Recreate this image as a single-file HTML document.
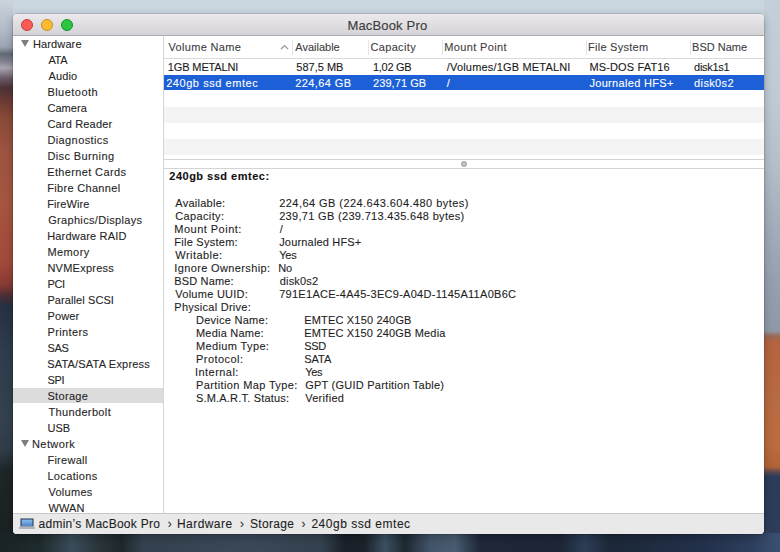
<!DOCTYPE html>
<html><head><meta charset="utf-8">
<style>
*{margin:0;padding:0;box-sizing:border-box}
html,body{width:780px;height:552px;overflow:hidden}
body{position:relative;font-family:"Liberation Sans",sans-serif;color:#1e1e1e;background:#aab3bf}
.bg{position:absolute;left:0;top:0;width:780px;height:552px;overflow:hidden}
.t{position:absolute;white-space:nowrap;line-height:1;-webkit-text-stroke:0.1px currentColor}
#win{position:absolute;left:13px;top:14px;width:751px;height:519.5px;border-radius:4px;overflow:hidden;background:#fff;box-shadow:0 0 0 0.5px rgba(0,0,0,0.22),0 3px 10px rgba(0,0,0,0.25)}
#title{position:absolute;left:0;top:0;width:751px;height:22px;background:linear-gradient(#ebe9eb,#d5d3d7);border-bottom:1px solid #ababab}
.tl{position:absolute;top:5px;width:12px;height:12px;border-radius:50%}
#ttext{position:absolute;left:0;top:4px;width:751px;text-align:center;font-size:13px;line-height:15px;color:#383838}
.tri{position:absolute;width:0;height:0;border-left:4.5px solid transparent;border-right:4.5px solid transparent;border-top:7px solid #7f7f7f}
.vd{position:absolute;width:1px;background:#e4e4e4}
</style></head><body>
<div class="bg">
 <div style="position:absolute;left:0;top:0;width:780px;height:552px;background:linear-gradient(#cad6e0 0px,#bfcbd5 100px,#a7b2bf 160px,#8e9aaa 240px,#8a95a3 330px,#2c3a50 470px,#243244 552px)"></div>
 <div style="position:absolute;left:0;top:0;width:13px;height:552px;background:linear-gradient(#cbd3dc 0px,#b2bcc8 30px,#9aa4b2 47px,#626a76 54px,#80808e 61px,#aca6b2 68px,#6c5c68 78px,#4c3238 88px,#6a3a34 100px,#8a4a38 118px,#9c5440 150px,#a65640 200px,#a24a3a 262px,#8a3c34 284px,#4a2e36 296px,#263242 306px,#2e3c4c 350px,#34424f 420px,#303c48 450px,#1e2628 470px,#182022 552px)"></div>
 <div style="position:absolute;left:764px;top:0;width:16px;height:552px;background:linear-gradient(#c4cfd9 0px,#bfcad4 100px,#b6c0cb 160px,#a4afbc 220px,#96a1b0 280px,#8e98a6 331px,#9a6a58 336px,#b4643e 342px,#b86a42 400px,#bc6c3e 445px,#b26238 467px,#5a4850 472px,#2c3c58 477px,#2e3e5a 552px)"></div>
 <div style="position:absolute;left:0;top:533px;width:780px;height:19px;background:linear-gradient(90deg,#1a2325 0px,#1e2a2c 40px,#3a4c5a 72px,#2a363c 98px,#1e282c 122px,#34424f 142px,#3a4858 250px,#34424f 322px,#1a2028 345px,#1c232a 365px,#3a5062 385px,#1e2830 405px,#42546a 430px,#4a5c72 455px,#1e2838 480px,#1c2636 560px,#2c3e56 585px,#1c2838 610px,#22304a 700px,#2c3c5a 745px,#3a5070 780px)"></div>
</div>
<div id="win">
 <div id="title">
  <div class="tl" style="left:8px;background:#fc5b55;border:1px solid #c23d3a"></div>
  <div class="tl" style="left:28px;background:#fdbb2f;border:1px solid #c98f22"></div>
  <div class="tl" style="left:48px;background:#2ac63e;border:1px solid #17902b"></div>
 </div>
 <div style="position:absolute;left:150px;top:22px;width:1px;height:477px;background:#d6d6d6"></div>
 <div style="position:absolute;left:0px;top:374px;width:150px;height:15px;background:#dcdcdc"></div>
 <div class="tri" style="left:8px;top:26px"></div>
 <div class="tri" style="left:8px;top:426px"></div>
 <div style="position:absolute;left:151px;top:44px;width:600px;height:1px;background:#dadada"></div>
 <div class="vd" style="left:279px;top:26px;height:15px"></div>
 <div class="vd" style="left:355px;top:26px;height:15px"></div>
 <div class="vd" style="left:429px;top:26px;height:15px"></div>
 <div class="vd" style="left:573px;top:26px;height:15px"></div>
 <div class="vd" style="left:677px;top:26px;height:15px"></div>
 <svg style="position:absolute;left:267px;top:30px" width="9" height="6"><path d="M1 5 L4.5 1.5 L8 5" fill="none" stroke="#9a9a9a" stroke-width="1.2"/></svg>
 <div style="position:absolute;left:151px;top:61px;width:600px;height:15px;background:#1d5fd6"></div>
 <div style="position:absolute;left:151px;top:93px;width:600px;height:16px;background:#f4f4f4"></div>
 <div style="position:absolute;left:151px;top:125px;width:600px;height:16px;background:#f4f4f4"></div>
 <div style="position:absolute;left:151px;top:145px;width:600px;height:1px;background:#d4d4d4"></div>
 <div style="position:absolute;left:151px;top:154px;width:600px;height:1px;background:#d4d4d4"></div>
 <div style="position:absolute;left:448px;top:147px;width:6px;height:6px;border-radius:50%;background:#c4c4c4;border:1.5px solid #9c9c9c"></div>
 <div style="position:absolute;left:0px;top:499px;width:751px;height:20.5px;background:#e9e9e9;border-top:1px solid #c8c8c8"></div>
 <svg style="position:absolute;left:6px;top:504px" width="17" height="12" viewBox="0 0 17 12"><defs><linearGradient id="lg" x1="0" y1="0" x2="0" y2="1"><stop offset="0" stop-color="#8cbcec"/><stop offset="1" stop-color="#4f86c6"/></linearGradient></defs><rect x="1.5" y="0.5" width="13" height="8" fill="#1c2f4a"/><rect x="2.5" y="1.5" width="11" height="6.5" fill="url(#lg)"/><rect x="0" y="8.6" width="16" height="2.4" rx="0.6" fill="#aeb3bb"/></svg>
 <div class="t" id="t0" style="left:20.00px;top:25.49px;font-size:11px;letter-spacing:0.120px;color:#262626">Hardware</div>
 <div class="t" id="t1" style="left:35.40px;top:41.49px;font-size:11px;letter-spacing:-0.300px;color:#262626">ATA</div>
 <div class="t" id="t2" style="left:35.40px;top:57.49px;font-size:11px;letter-spacing:0.150px;color:#262626">Audio</div>
 <div class="t" id="t3" style="left:34.40px;top:73.49px;font-size:11px;letter-spacing:0.475px;color:#262626">Bluetooth</div>
 <div class="t" id="t4" style="left:34.40px;top:89.49px;font-size:11px;letter-spacing:0.050px;color:#262626">Camera</div>
 <div class="t" id="t5" style="left:34.40px;top:105.49px;font-size:11px;letter-spacing:0.180px;color:#262626">Card Reader</div>
 <div class="t" id="t6" style="left:34.40px;top:121.49px;font-size:11px;letter-spacing:0.400px;color:#262626">Diagnostics</div>
 <div class="t" id="t7" style="left:34.40px;top:137.49px;font-size:11px;letter-spacing:0.390px;color:#262626">Disc Burning</div>
 <div class="t" id="t8" style="left:34.20px;top:153.49px;font-size:11px;letter-spacing:0.364px;color:#262626">Ethernet Cards</div>
 <div class="t" id="t9" style="left:34.20px;top:169.49px;font-size:11px;letter-spacing:0.316px;color:#262626">Fibre Channel</div>
 <div class="t" id="t10" style="left:34.20px;top:185.49px;font-size:11px;letter-spacing:0.090px;color:#262626">FireWire</div>
 <div class="t" id="t11" style="left:35.20px;top:201.49px;font-size:11px;letter-spacing:0.323px;color:#262626">Graphics/Displays</div>
 <div class="t" id="t12" style="left:34.20px;top:217.49px;font-size:11px;letter-spacing:0.182px;color:#262626">Hardware RAID</div>
 <div class="t" id="t13" style="left:34.40px;top:233.49px;font-size:11px;letter-spacing:0.430px;color:#262626">Memory</div>
 <div class="t" id="t14" style="left:34.40px;top:249.49px;font-size:11px;letter-spacing:0.251px;color:#262626">NVMExpress</div>
 <div class="t" id="t15" style="left:34.40px;top:265.49px;font-size:11px;letter-spacing:-0.300px;color:#262626">PCI</div>
 <div class="t" id="t16" style="left:34.40px;top:281.49px;font-size:11px;letter-spacing:0.093px;color:#262626">Parallel SCSI</div>
 <div class="t" id="t17" style="left:34.40px;top:297.49px;font-size:11px;letter-spacing:0.175px;color:#262626">Power</div>
 <div class="t" id="t18" style="left:34.40px;top:313.49px;font-size:11px;letter-spacing:0.403px;color:#262626">Printers</div>
 <div class="t" id="t19" style="left:34.40px;top:329.49px;font-size:11px;letter-spacing:-0.300px;color:#262626">SAS</div>
 <div class="t" id="t20" style="left:34.20px;top:345.49px;font-size:11px;letter-spacing:0.198px;color:#262626">SATA/SATA Express</div>
 <div class="t" id="t21" style="left:34.40px;top:361.49px;font-size:11px;letter-spacing:-0.300px;color:#262626">SPI</div>
 <div class="t" id="t22" style="left:34.40px;top:377.49px;font-size:11px;letter-spacing:0.335px;color:#262626">Storage</div>
 <div class="t" id="t23" style="left:35.40px;top:393.49px;font-size:11px;letter-spacing:0.360px;color:#262626">Thunderbolt</div>
 <div class="t" id="t24" style="left:34.40px;top:409.49px;font-size:11px;letter-spacing:0.100px;color:#262626">USB</div>
 <div class="t" id="t25" style="left:19.00px;top:425.49px;font-size:11px;letter-spacing:0.417px;color:#262626">Network</div>
 <div class="t" id="t26" style="left:34.40px;top:441.49px;font-size:11px;letter-spacing:0.282px;color:#262626">Firewall</div>
 <div class="t" id="t27" style="left:34.40px;top:457.49px;font-size:11px;letter-spacing:0.350px;color:#262626">Locations</div>
 <div class="t" id="t28" style="left:35.40px;top:473.49px;font-size:11px;letter-spacing:0.285px;color:#262626">Volumes</div>
 <div class="t" id="t29" style="left:35.40px;top:489.49px;font-size:11px;letter-spacing:0.150px;color:#262626">WWAN</div>
 <div class="t" id="t30" style="left:155.50px;top:27.69px;font-size:11px;letter-spacing:0.330px;color:#404040">Volume Name</div>
 <div class="t" id="t31" style="left:282.30px;top:27.69px;font-size:11px;letter-spacing:-0.000px;color:#404040">Available</div>
 <div class="t" id="t32" style="left:357.40px;top:27.69px;font-size:11px;letter-spacing:0.353px;color:#404040">Capacity</div>
 <div class="t" id="t33" style="left:431.30px;top:27.69px;font-size:11px;letter-spacing:0.350px;color:#404040">Mount Point</div>
 <div class="t" id="t34" style="left:575.10px;top:27.69px;font-size:11px;letter-spacing:0.250px;color:#404040">File System</div>
 <div class="t" id="t35" style="left:679.10px;top:27.69px;font-size:11px;letter-spacing:0.007px;color:#404040">BSD Name</div>
 <div class="t" id="t36" style="left:154.80px;top:47.79px;font-size:11px;letter-spacing:-0.130px;color:#1a1a1a">1GB METALNI</div>
 <div class="t" id="t37" style="left:283.30px;top:47.79px;font-size:11px;letter-spacing:0.007px;color:#1a1a1a">587,5 MB</div>
 <div class="t" id="t38" style="left:360.00px;top:47.79px;font-size:11px;letter-spacing:-0.300px;color:#1a1a1a">1,02 GB</div>
 <div class="t" id="t39" style="left:433.80px;top:47.79px;font-size:11px;letter-spacing:0.179px;color:#1a1a1a">/Volumes/1GB METALNI</div>
 <div class="t" id="t40" style="left:576.40px;top:47.79px;font-size:11px;letter-spacing:0.149px;color:#1a1a1a">MS-DOS FAT16</div>
 <div class="t" id="t41" style="left:681.10px;top:47.79px;font-size:11px;letter-spacing:-0.300px;color:#1a1a1a">disk1s1</div>
 <div class="t" id="t42" style="left:153.20px;top:63.69px;font-size:11px;letter-spacing:0.553px;color:#ffffff">240gb ssd emtec</div>
 <div class="t" id="t43" style="left:282.30px;top:63.69px;font-size:11px;letter-spacing:0.406px;color:#ffffff">224,64 GB</div>
 <div class="t" id="t44" style="left:360.00px;top:63.69px;font-size:11px;letter-spacing:0.075px;color:#ffffff">239,71 GB</div>
 <div class="t" id="t45" style="left:433.80px;top:63.69px;font-size:11px;letter-spacing:0.150px;color:#ffffff">/</div>
 <div class="t" id="t46" style="left:576.40px;top:63.69px;font-size:11px;letter-spacing:0.318px;color:#ffffff">Journaled HFS+</div>
 <div class="t" id="t47" style="left:681.10px;top:63.69px;font-size:11px;letter-spacing:0.366px;color:#ffffff">disk0s2</div>
 <div class="t" id="t48" style="left:156.30px;top:156.89px;font-size:11px;letter-spacing:0.495px;color:#111;font-weight:bold">240gb ssd emtec:</div>
 <div class="t" id="t49" style="left:162.30px;top:183.99px;font-size:11px;letter-spacing:0.261px;color:#1e1e1e">Available:</div>
 <div class="t" id="t50" style="left:266.20px;top:183.99px;font-size:11px;letter-spacing:0.445px;color:#1e1e1e">224,64 GB (224.643.604.480 bytes)</div>
 <div class="t" id="t51" style="left:162.30px;top:196.99px;font-size:11px;letter-spacing:0.350px;color:#1e1e1e">Capacity:</div>
 <div class="t" id="t52" style="left:266.20px;top:196.99px;font-size:11px;letter-spacing:0.316px;color:#1e1e1e">239,71 GB (239.713.435.648 bytes)</div>
 <div class="t" id="t53" style="left:161.30px;top:209.99px;font-size:11px;letter-spacing:0.479px;color:#1e1e1e">Mount Point:</div>
 <div class="t" id="t54" style="left:266.80px;top:209.99px;font-size:11px;letter-spacing:0.150px;color:#1e1e1e">/</div>
 <div class="t" id="t55" style="left:161.30px;top:222.99px;font-size:11px;letter-spacing:0.255px;color:#1e1e1e">File System:</div>
 <div class="t" id="t56" style="left:266.20px;top:222.99px;font-size:11px;letter-spacing:0.178px;color:#1e1e1e">Journaled HFS+</div>
 <div class="t" id="t57" style="left:162.30px;top:235.99px;font-size:11px;letter-spacing:0.457px;color:#1e1e1e">Writable:</div>
 <div class="t" id="t58" style="left:266.20px;top:235.99px;font-size:11px;letter-spacing:-0.250px;color:#1e1e1e">Yes</div>
 <div class="t" id="t59" style="left:161.30px;top:248.99px;font-size:11px;letter-spacing:0.365px;color:#1e1e1e">Ignore Ownership:</div>
 <div class="t" id="t60" style="left:265.20px;top:248.99px;font-size:11px;letter-spacing:-0.200px;color:#1e1e1e">No</div>
 <div class="t" id="t61" style="left:161.30px;top:261.99px;font-size:11px;letter-spacing:0.150px;color:#1e1e1e">BSD Name:</div>
 <div class="t" id="t62" style="left:266.80px;top:261.99px;font-size:11px;letter-spacing:0.150px;color:#1e1e1e">disk0s2</div>
 <div class="t" id="t63" style="left:162.30px;top:274.99px;font-size:11px;letter-spacing:0.262px;color:#1e1e1e">Volume UUID:</div>
 <div class="t" id="t64" style="left:266.20px;top:274.99px;font-size:11px;letter-spacing:0.278px;color:#1e1e1e">791E1ACE-4A45-3EC9-A04D-1145A11A0B6C</div>
 <div class="t" id="t65" style="left:161.30px;top:287.99px;font-size:11px;letter-spacing:0.268px;color:#1e1e1e">Physical Drive:</div>
 <div class="t" id="t66" style="left:183.00px;top:300.99px;font-size:11px;letter-spacing:0.262px;color:#1e1e1e">Device Name:</div>
 <div class="t" id="t67" style="left:291.20px;top:300.99px;font-size:11px;letter-spacing:0.181px;color:#1e1e1e">EMTEC X150 240GB</div>
 <div class="t" id="t68" style="left:183.00px;top:313.99px;font-size:11px;letter-spacing:0.210px;color:#1e1e1e">Media Name:</div>
 <div class="t" id="t69" style="left:291.20px;top:313.99px;font-size:11px;letter-spacing:0.172px;color:#1e1e1e">EMTEC X150 240GB Media</div>
 <div class="t" id="t70" style="left:183.00px;top:326.99px;font-size:11px;letter-spacing:0.367px;color:#1e1e1e">Medium Type:</div>
 <div class="t" id="t71" style="left:291.20px;top:326.99px;font-size:11px;letter-spacing:-0.300px;color:#1e1e1e">SSD</div>
 <div class="t" id="t72" style="left:183.00px;top:339.99px;font-size:11px;letter-spacing:0.443px;color:#1e1e1e">Protocol:</div>
 <div class="t" id="t73" style="left:291.20px;top:339.99px;font-size:11px;letter-spacing:-0.003px;color:#1e1e1e">SATA</div>
 <div class="t" id="t74" style="left:182.00px;top:352.99px;font-size:11px;letter-spacing:0.450px;color:#1e1e1e">Internal:</div>
 <div class="t" id="t75" style="left:292.20px;top:352.99px;font-size:11px;letter-spacing:-0.300px;color:#1e1e1e">Yes</div>
 <div class="t" id="t76" style="left:183.00px;top:365.99px;font-size:11px;letter-spacing:0.373px;color:#1e1e1e">Partition Map Type:</div>
 <div class="t" id="t77" style="left:292.20px;top:365.99px;font-size:11px;letter-spacing:0.238px;color:#1e1e1e">GPT (GUID Partition Table)</div>
 <div class="t" id="t78" style="left:183.00px;top:378.99px;font-size:11px;letter-spacing:0.184px;color:#1e1e1e">S.M.A.R.T. Status:</div>
 <div class="t" id="t79" style="left:292.20px;top:378.99px;font-size:11px;letter-spacing:0.293px;color:#1e1e1e">Verified</div>
 <div class="t" id="t80" style="left:25.50px;top:504.14px;font-size:12px;letter-spacing:0.272px;color:#1e1e1e">admin’s MacBook Pro</div>
 <div class="t" id="t81" style="left:164.00px;top:504.14px;font-size:12px;letter-spacing:0.435px;color:#1e1e1e">Hardware</div>
 <div class="t" id="t82" style="left:236.90px;top:504.14px;font-size:12px;letter-spacing:0.349px;color:#1e1e1e">Storage</div>
 <div class="t" id="t83" style="left:298.40px;top:504.14px;font-size:12px;letter-spacing:0.521px;color:#1e1e1e">240gb ssd emtec</div>
 <div class="t" id="t84" style="left:154.70px;top:504.14px;font-size:12px;letter-spacing:0.150px;color:#333">›</div>
 <div class="t" id="t85" style="left:227.00px;top:504.14px;font-size:12px;letter-spacing:0.150px;color:#333">›</div>
 <div class="t" id="t86" style="left:288.40px;top:504.14px;font-size:12px;letter-spacing:0.150px;color:#333">›</div>
 <div class="t" id="t87" style="left:334.40px;top:4.90px;font-size:13px;letter-spacing:0.170px;color:#3a3a3a">MacBook Pro</div>
</div>
</body></html>
